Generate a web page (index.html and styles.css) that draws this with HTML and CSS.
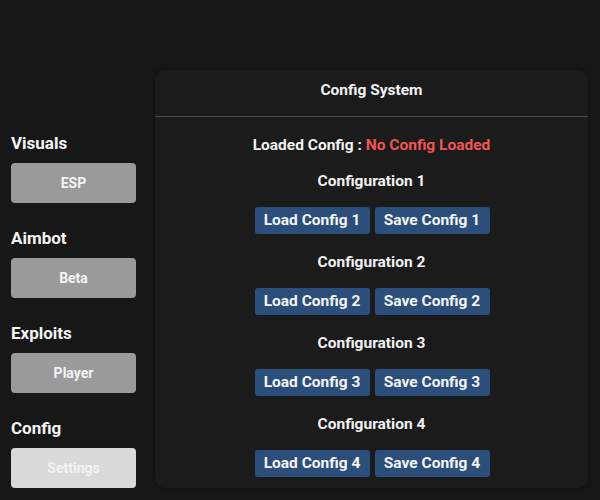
FILE: index.html
```html
<!DOCTYPE html>
<html>
<head>
<meta charset="utf-8">
<link rel="stylesheet" href="styles.css">
</head>
<body>
<div class="app">
  <aside class="sidebar">
    <div class="section">
      <div class="section-label">Visuals</div>
      <div class="nav-btn">ESP</div>
    </div>
    <div class="section">
      <div class="section-label">Aimbot</div>
      <div class="nav-btn">Beta</div>
    </div>
    <div class="section">
      <div class="section-label">Exploits</div>
      <div class="nav-btn">Player</div>
    </div>
    <div class="section">
      <div class="section-label">Config</div>
      <div class="nav-btn active">Settings</div>
    </div>
  </aside>
  <main class="panel">
    <div class="panel-title">Config System</div>
    <div class="panel-body">
      <div class="loaded">Loaded Config : <span class="loaded-value">No Config Loaded</span></div>
      <div class="config">
        <div class="config-title">Configuration 1</div>
        <div class="config-actions"><span class="btn">Load Config 1</span><span class="btn">Save Config 1</span></div>
      </div>
      <div class="config">
        <div class="config-title">Configuration 2</div>
        <div class="config-actions"><span class="btn">Load Config 2</span><span class="btn">Save Config 2</span></div>
      </div>
      <div class="config">
        <div class="config-title">Configuration 3</div>
        <div class="config-actions"><span class="btn">Load Config 3</span><span class="btn">Save Config 3</span></div>
      </div>
      <div class="config">
        <div class="config-title">Configuration 4</div>
        <div class="config-actions"><span class="btn">Load Config 4</span><span class="btn">Save Config 4</span></div>
      </div>
    </div>
  </main>
</div>
</body>
</html>
```

FILE: styles.css
```css
html, body {
  margin: 0;
  padding: 0;
  background: #171717;
  font-family: Roboto, "Liberation Sans", sans-serif;
  font-weight: 700;
  color: #f2f2f2;
}

.app {
  display: flex;
  width: 600px;
  height: 500px;
  overflow: hidden;
}

.sidebar {
  width: 125px;
  padding: 133px 19px 0 11px;
  display: flex;
  flex-direction: column;
  gap: 25px;
  flex-shrink: 0;
}

.section-label {
  font-size: 17px;
  line-height: 20px;
  margin-bottom: 10px;
  color: #f4f4f4;
}

.nav-btn {
  height: 40px;
  line-height: 40px;
  background: #9a9a9a;
  border-radius: 4px;
  text-align: center;
  font-size: 14px;
  color: #f4f4f4;
}

.nav-btn.active {
  background: #d9d9d9;
  color: #f3f3f3;
}

.panel {
  margin-top: 70px;
  width: 433px;
  height: 418px;
  background: #1b1b1b;
  border-radius: 10px;
  box-shadow: 0 0 4px rgba(0, 0, 0, 0.35);
  display: flex;
  flex-direction: column;
}

.panel-title {
  font-size: 15.5px;
  line-height: 40px;
  padding-bottom: 6px;
  text-align: center;
  border-bottom: 1px solid #4a4a50;
}

.panel-body {
  padding-top: 18px;
  display: flex;
  flex-direction: column;
  align-items: center;
  gap: 18px;
  font-size: 15.5px;
}

.loaded {
  line-height: 20px;
  margin-bottom: -2px;
}

.loaded-value {
  color: #f25454;
}

.config {
  display: flex;
  flex-direction: column;
  align-items: center;
  gap: 16px;
}

.config-title {
  line-height: 20px;
}

.config-actions {
  display: flex;
  gap: 5px;
  padding-left: 1px;
}

.btn {
  width: 115px;
  box-sizing: border-box;
  text-align: center;
  line-height: 19px;
  padding: 4px 0;
  background: #2b4f7a;
  border-radius: 3px;
  color: #f4f4f4;
}
```
